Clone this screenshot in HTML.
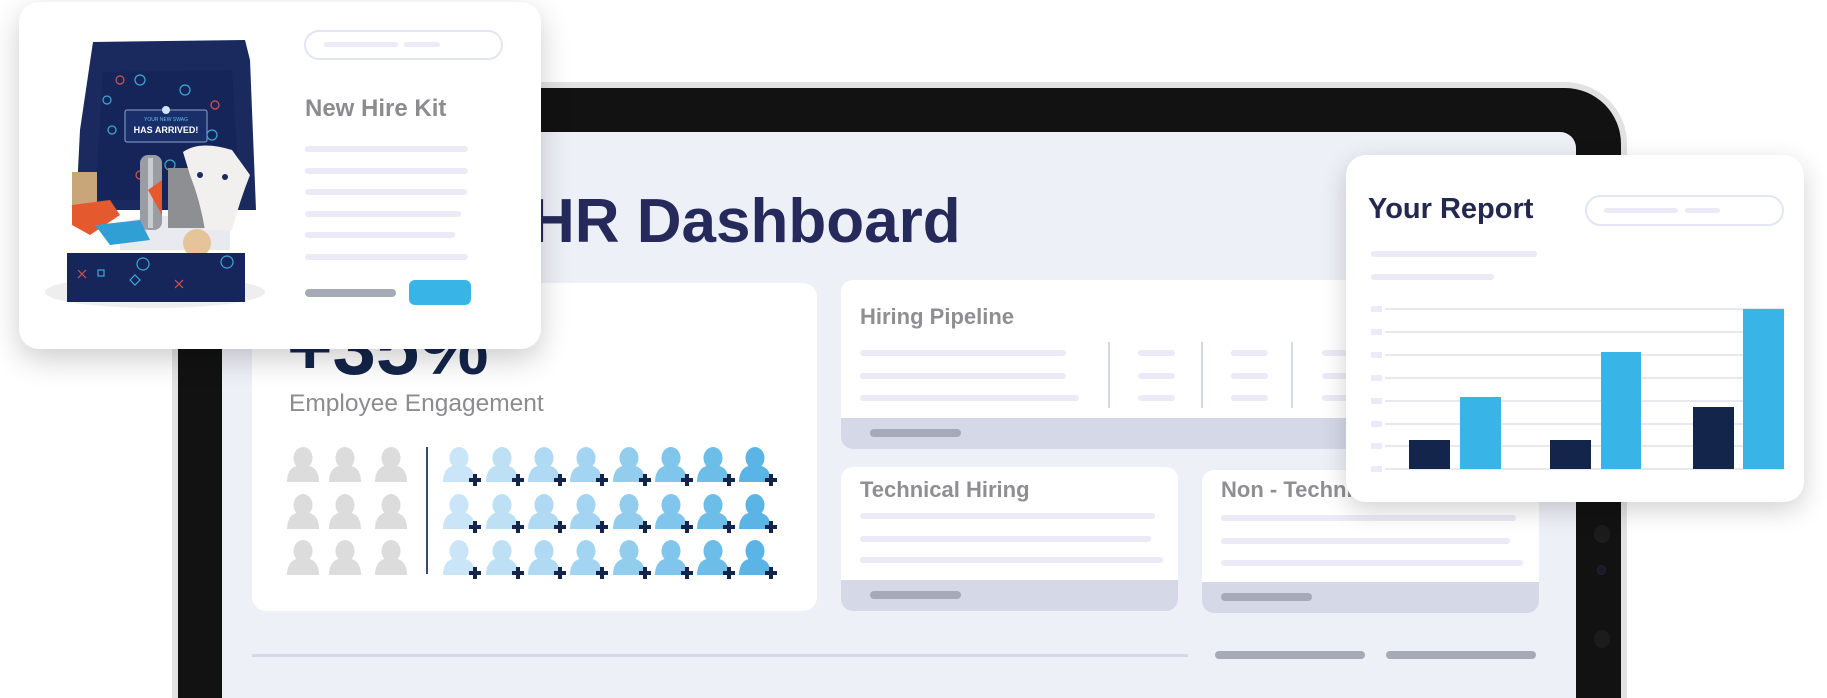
<!DOCTYPE html>
<html style="overflow:hidden;width:1827px;height:698px"><head><meta charset="utf-8"><style>
*{margin:0;padding:0;box-sizing:border-box}
body{width:1827px;height:698px;overflow:hidden;background:#fff;position:relative;font-family:"Liberation Sans",sans-serif}
.a{position:absolute}
.ln{position:absolute;height:6px;background:#ebeaf6;border-radius:3px}
.gp{position:absolute;height:8px;background:#a5aab6;border-radius:4px}
.card{position:absolute;background:#fff;border-radius:12px;overflow:hidden}
.ft{position:absolute;left:0;right:0;bottom:0;background:#d5d8e6}
.tt{position:absolute;font-weight:bold;color:#8f8f93;font-size:22px}
</style></head><body>

<!-- tablet -->
<div class="a" style="left:172px;top:82px;width:1455px;height:616px;background:#e2e2e2;border-radius:62px 62px 0 0"></div>
<div class="a" style="left:178px;top:88px;width:1443px;height:610px;background:#121212;border-radius:56px 56px 0 0"></div>
<div class="a" style="left:1594px;top:525px;width:16px;height:18px;border-radius:8px;background:#1c1c1c"></div>
<div class="a" style="left:1597px;top:565px;width:9px;height:10px;border-radius:5px;background:#1a1a2a;border:1px solid #223"></div>
<div class="a" style="left:1594px;top:630px;width:16px;height:18px;border-radius:8px;background:#1c1c1c"></div>
<div class="a" style="left:222px;top:132px;width:1354px;height:566px;background:#eef0f8;border-radius:16px 16px 0 0"></div>

<div class="a" style="left:530px;top:186px;font-size:62px;font-weight:bold;color:#262a5a">HR Dashboard</div>

<!-- big card -->
<div class="card" style="left:252px;top:283px;width:565px;height:328px;border-radius:14px"></div>
<div class="a" style="left:287px;top:308px;font-size:78px;font-weight:bold;color:#13254a;line-height:78px">+35%</div>
<div class="a" style="left:289px;top:390px;font-size:24.5px;color:#8c8c90">Employee Engagement</div>
<div class="a" style="left:426px;top:447px;width:2px;height:127px;background:#3a4a6a"></div>
<svg class="a" style="left:0;top:0" width="1827" height="698">
<defs>
<symbol id="p" viewBox="0 0 32 35"><ellipse cx="16" cy="11" rx="9.5" ry="11"/><path d="M0 35 Q0 18 16 18 Q32 18 32 35 Z"/></symbol>
</defs>
<g fill="#dcdcdc">
<use href="#p" x="287" y="447" width="32" height="35"/><use href="#p" x="329" y="447" width="32" height="35"/><use href="#p" x="375" y="447" width="32" height="35"/>
<use href="#p" x="287" y="494" width="32" height="35"/><use href="#p" x="329" y="494" width="32" height="35"/><use href="#p" x="375" y="494" width="32" height="35"/>
<use href="#p" x="287" y="540" width="32" height="35"/><use href="#p" x="329" y="540" width="32" height="35"/><use href="#p" x="375" y="540" width="32" height="35"/>
</g>
</svg>
<svg class="a" style="left:0;top:0" width="1827" height="698" id="blue"></svg>

<!-- hiring pipeline -->
<div class="card" style="left:841px;top:280px;width:520px;height:169px">
 <div class="ft" style="height:31px"></div>
</div>
<div class="tt" style="left:860px;top:304px">Hiring Pipeline</div>
<div class="ln" style="left:860px;top:350px;width:206px"></div>
<div class="ln" style="left:860px;top:373px;width:206px"></div>
<div class="ln" style="left:860px;top:395px;width:219px"></div>
<div class="a" style="left:1108px;top:342px;width:2px;height:66px;background:#d5d8e6"></div>
<div class="a" style="left:1201px;top:342px;width:2px;height:66px;background:#d5d8e6"></div>
<div class="a" style="left:1291px;top:342px;width:2px;height:66px;background:#d5d8e6"></div>
<div class="ln" style="left:1138px;top:350px;width:37px"></div><div class="ln" style="left:1138px;top:373px;width:37px"></div><div class="ln" style="left:1138px;top:395px;width:37px"></div>
<div class="ln" style="left:1231px;top:350px;width:37px"></div><div class="ln" style="left:1231px;top:373px;width:37px"></div><div class="ln" style="left:1231px;top:395px;width:37px"></div>
<div class="ln" style="left:1322px;top:350px;width:37px"></div><div class="ln" style="left:1322px;top:373px;width:37px"></div><div class="ln" style="left:1322px;top:395px;width:37px"></div>
<div class="gp" style="left:870px;top:429px;width:91px"></div>

<!-- technical -->
<div class="card" style="left:841px;top:467px;width:337px;height:144px"><div class="ft" style="height:31px"></div></div>
<div class="tt" style="left:860px;top:477px">Technical Hiring</div>
<div class="ln" style="left:860px;top:513px;width:295px"></div>
<div class="ln" style="left:860px;top:536px;width:291px"></div>
<div class="ln" style="left:860px;top:557px;width:303px"></div>
<div class="gp" style="left:870px;top:591px;width:91px"></div>

<div class="card" style="left:1202px;top:470px;width:337px;height:143px"><div class="ft" style="height:31px"></div></div>
<div class="tt" style="left:1221px;top:477px">Non - Technical</div>
<div class="ln" style="left:1221px;top:515px;width:295px"></div>
<div class="ln" style="left:1221px;top:538px;width:289px"></div>
<div class="ln" style="left:1221px;top:560px;width:302px"></div>
<div class="gp" style="left:1221px;top:593px;width:91px"></div>

<div class="a" style="left:252px;top:654px;width:936px;height:3px;background:#d5d8e6"></div>
<div class="gp" style="left:1215px;top:651px;width:150px"></div>
<div class="gp" style="left:1386px;top:651px;width:150px"></div>

<!-- report card -->
<div class="card" style="left:1346px;top:155px;width:458px;height:347px;border-radius:20px;box-shadow:0 8px 26px rgba(0,0,0,.18)"></div>
<div class="a" style="left:1368px;top:193px;font-size:29px;font-weight:bold;color:#22284f">Your Report</div>
<div class="a" style="left:1585px;top:195px;width:199px;height:31px;border:2px solid #e4e5f4;border-radius:16px"></div>
<div class="ln" style="left:1604px;top:208px;width:74px;height:5px"></div>
<div class="ln" style="left:1685px;top:208px;width:35px;height:5px"></div>
<div class="ln" style="left:1371px;top:251px;width:166px"></div>
<div class="ln" style="left:1371px;top:274px;width:123px"></div>
<svg class="a" style="left:0;top:0" width="1827" height="698">
<g fill="#ebeaf6"><rect x="1371" y="306" width="11" height="6"/><rect x="1371" y="329" width="11" height="6"/><rect x="1371" y="352" width="11" height="6"/><rect x="1371" y="375" width="11" height="6"/><rect x="1371" y="398" width="11" height="6"/><rect x="1371" y="421" width="11" height="6"/><rect x="1371" y="443" width="11" height="6"/><rect x="1371" y="466" width="11" height="6"/></g>
<g stroke="#dfe0ec" stroke-width="1.5"><line x1="1385" x2="1784" y1="309" y2="309"/><line x1="1385" x2="1784" y1="332" y2="332"/><line x1="1385" x2="1784" y1="355" y2="355"/><line x1="1385" x2="1784" y1="378" y2="378"/><line x1="1385" x2="1784" y1="401" y2="401"/><line x1="1385" x2="1784" y1="424" y2="424"/><line x1="1385" x2="1784" y1="446" y2="446"/><line x1="1385" x2="1784" y1="469" y2="469"/></g>
<g fill="#13254a"><rect x="1409" y="440" width="41" height="29"/><rect x="1550" y="440" width="41" height="29"/><rect x="1693" y="407" width="41" height="62"/></g>
<g fill="#38b5e6"><rect x="1460" y="397" width="41" height="72"/><rect x="1601" y="352" width="40" height="117"/><rect x="1743" y="309" width="41" height="160"/></g>
</svg>

<!-- new hire kit card -->
<div class="card" style="left:19px;top:2px;width:522px;height:347px;border-radius:20px;box-shadow:0 10px 30px rgba(0,0,0,.2)"></div>
<div class="a" style="left:304px;top:30px;width:199px;height:30px;border:2px solid #e4e5f4;border-radius:15px"></div>
<div class="ln" style="left:324px;top:42px;width:74px;height:5px"></div>
<div class="ln" style="left:404px;top:42px;width:36px;height:5px"></div>
<div class="a" style="left:305px;top:95px;font-size:24px;font-weight:bold;color:#8c8c90">New Hire Kit</div>
<div class="ln" style="left:305px;top:146px;width:163px"></div>
<div class="ln" style="left:305px;top:168px;width:163px"></div>
<div class="ln" style="left:305px;top:189px;width:162px"></div>
<div class="ln" style="left:305px;top:211px;width:156px"></div>
<div class="ln" style="left:305px;top:232px;width:150px"></div>
<div class="ln" style="left:305px;top:254px;width:163px"></div>
<div class="gp" style="left:305px;top:289px;width:91px"></div>
<div class="a" style="left:409px;top:280px;width:62px;height:25px;background:#38b5e6;border-radius:6px"></div>

<svg class="a" style="left:0;top:0" width="560" height="360">
<ellipse cx="155" cy="292" rx="110" ry="16" fill="#eee"/>
<path d="M93 42 L245 40 L250 60 L256 210 L76 210 L80 130 Z" fill="#1b2a5e"/>
<path d="M103 72 L232 70 L240 200 L95 200 Z" fill="#162559"/>
<rect x="125" y="110" width="82" height="32" rx="2" fill="#1a2f6a" stroke="#8fa3c8" stroke-width="1"/>
<text x="166" y="121" font-size="5" fill="#5dbde6" text-anchor="middle" font-family="Liberation Sans">YOUR NEW SWAG</text>
<text x="166" y="133" font-size="9" font-weight="bold" fill="#fff" text-anchor="middle" font-family="Liberation Sans">HAS ARRIVED!</text>
<circle cx="166" cy="110" r="4" fill="#cfe6f5"/>
<g fill="none" stroke="#3fa7d8" stroke-width="1.2"><circle cx="140" cy="80" r="5"/><circle cx="185" cy="90" r="5"/><circle cx="112" cy="130" r="4"/><circle cx="212" cy="135" r="5"/><circle cx="170" cy="165" r="5"/><circle cx="107" cy="100" r="4"/></g>
<g fill="none" stroke="#d9534f" stroke-width="1.2"><circle cx="120" cy="80" r="4"/><circle cx="215" cy="105" r="4"/><circle cx="140" cy="175" r="4"/></g>
<path d="M120 225 Q160 205 230 228 L230 250 L120 250 Z" fill="#e9e9f0"/>
<rect x="140" y="155" width="22" height="75" rx="8" fill="#9a9ea3"/>
<rect x="148" y="158" width="5" height="70" fill="#c9ccd0"/>
<path d="M148 190 L162 180 L162 215 Z" fill="#e5592f"/>
<rect x="168" y="168" width="45" height="60" fill="#8e8f92"/>
<path d="M183 152 Q200 140 232 150 L250 175 Q240 200 232 230 L205 230 Q200 200 190 175 Z" fill="#f1f0ee"/>
<circle cx="200" cy="175" r="3" fill="#1b2a5e"/><circle cx="225" cy="177" r="3" fill="#1b2a5e"/>
<rect x="72" y="172" width="25" height="40" fill="#c9a57a"/>
<path d="M72 205 L110 200 L120 215 L90 235 L72 225 Z" fill="#e5592f"/>
<path d="M95 225 L140 220 L150 240 L110 245 Z" fill="#2f9fd4"/>
<circle cx="197" cy="243" r="14" fill="#e6c49a"/>
<path d="M67 253 L245 253 L245 302 L67 302 Z" fill="#17265a"/>
<g fill="none" stroke="#3fa7d8" stroke-width="1.2"><circle cx="143" cy="264" r="6"/><circle cx="227" cy="262" r="6"/><rect x="98" y="270" width="6" height="6"/><path d="M130 280 l5 -5 l5 5 l-5 5z"/></g>
<g fill="none" stroke="#d9534f" stroke-width="1.2"><path d="M78 270 l8 8 M86 270 l-8 8"/><path d="M175 280 l8 8 M183 280 l-8 8"/></g>
</svg>

<script>
var c=["#c9e5f7","#bde0f5","#b0daf3","#a3d4f1","#93cdee","#80c5ec","#6dbde9","#5ab5e6"],xs=[443,486,528,570,613,655,697,739],ys=[447,494,540],s="";
for(var r=0;r<3;r++)for(var i=0;i<8;i++){s+='<use href="#p" x="'+xs[i]+'" y="'+ys[r]+'" width="32" height="35" fill="'+c[i]+'"/>';
var px=xs[i]+32,py=ys[r]+33;s+='<path d="M'+(px-2)+' '+(py-6)+'h4v4h4v4h-4v4h-4v-4h-4v-4h4z" fill="#13254a"/>';}
document.getElementById("blue").innerHTML=s;
</script>
</body></html>
